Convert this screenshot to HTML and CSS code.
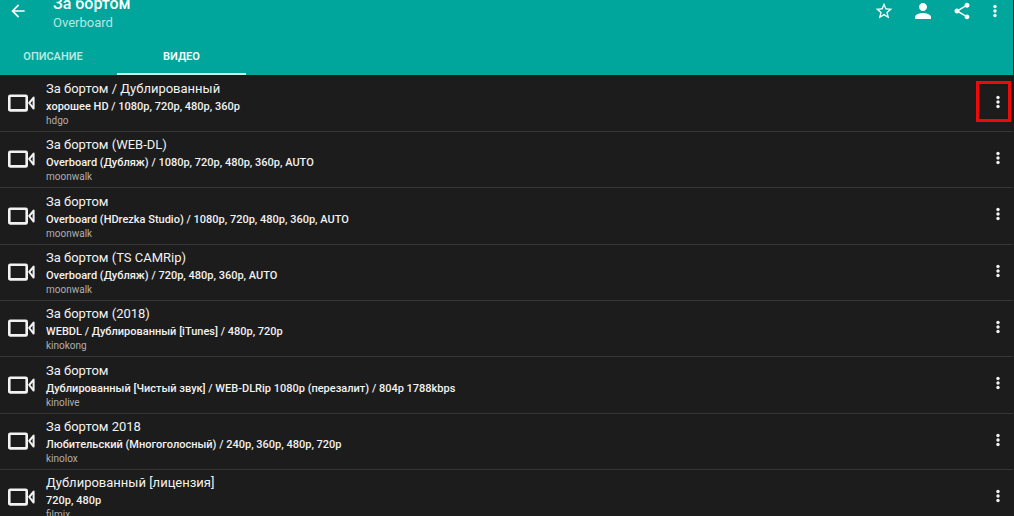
FILE: index.html
```html
<!DOCTYPE html>
<html lang="ru">
<head>
    <meta charset="UTF-8">
    <meta name="viewport" content="width=device-width, initial-scale=1.0">
    <title>За бортом</title>
    <link rel="stylesheet" href="styles.css">
</head>
<body>

    <!-- Общие иконки -->
    <svg class="sprite" aria-hidden="true">
        <symbol id="camera" viewBox="0 0 28 18">
            <rect x="1.300" y="1.800" width="17.400" height="14.600" rx="1" fill="none" stroke="currentColor" stroke-width="2.600"/>
            <path d="M25.600 3.600v11L21.200 9z" fill="none" stroke="currentColor" stroke-width="2" stroke-linejoin="round"/>
        </symbol>
        <symbol id="dots" viewBox="0 0 4 14">
            <circle cx="2" cy="2.500" r="1.700"/>
            <circle cx="2" cy="7" r="1.700"/>
            <circle cx="2" cy="11.500" r="1.700"/>
        </symbol>
    </svg>

    <div class="app">
        <header class="header">
            <div class="toolbar">
                <button class="icon-button back" aria-label="Назад">
                    <svg width="20" height="20" viewBox="0 0 24 24"><path d="M20 11H7.830l5.590-5.590L12 4l-8 8 8 8 1.410-1.410L7.830 13H20z"/></svg>
                </button>
                <div class="heading">
                    <h1>За бортом</h1>
                    <p>Overboard</p>
                </div>
                <div class="actions">
                    <button class="icon-button" aria-label="В избранное">
                        <svg width="20" height="20" viewBox="0 0 24 24"><path d="M22 9.240l-7.190-.62L12 2 9.190 8.630 2 9.240l5.460 4.730L5.820 21 12 17.270 18.180 21l-1.630-7.030zM12 15.400l-3.760 2.270 1-4.280-3.320-2.880 4.380-.38L12 6.100l1.710 4.040 4.380.38-3.320 2.880 1 4.280z"/></svg>
                    </button>
                    <button class="icon-button" aria-label="Профиль">
                        <svg width="24" height="24" viewBox="0 0 24 24"><path d="M12 12c2.210 0 4-1.790 4-4s-1.790-4-4-4-4 1.790-4 4 1.790 4 4 4zm0 2c-2.670 0-8 1.340-8 4v2h16v-2c0-2.660-5.330-4-8-4z"/></svg>
                    </button>
                    <button class="icon-button" aria-label="Поделиться">
                        <svg width="20" height="20" viewBox="0 0 24 24"><path d="M18 16.080c-.76 0-1.440.3-1.960.77L8.910 12.700c.05-.23.09-.46.09-.7s-.04-.47-.09-.7l7.050-4.110c.54.5 1.250.81 2.040.81 1.660 0 3-1.340 3-3s-1.340-3-3-3-3 1.340-3 3c0 .24.04.47.09.7L8.040 9.810C7.500 9.310 6.790 9 6 9c-1.660 0-3 1.340-3 3s1.340 3 3 3c.79 0 1.500-.31 2.040-.81l7.120 4.160c-.05.21-.08.43-.08.65 0 1.610 1.310 2.920 2.920 2.920s2.920-1.310 2.920-2.920-1.310-2.920-2.920-2.920z"/></svg>
                    </button>
                    <button class="icon-button menu" aria-label="Меню">
                        <svg width="4" height="14"><use href="#dots"/></svg>
                    </button>
                </div>
            </div>
            <nav class="tabs">
                <a class="tab" href="#about">ОПИСАНИЕ</a>
                <a class="tab active" href="#video">ВИДЕО</a>
            </nav>
        </header>

        <ul class="list" id="video">
            <li class="row">
                <svg class="camera" width="28" height="18"><use href="#camera"/></svg>
                <div class="info">
                    <h2>За бортом / Дублированный</h2>
                    <p>хорошее HD / 1080p, 720p, 480p, 360p</p>
                    <small>hdgo</small>
                </div>
                <button class="more" aria-label="Ещё"><svg width="4" height="14"><use href="#dots"/></svg></button>
                <span class="highlight"></span>
            </li>
            <li class="row">
                <svg class="camera" width="28" height="18"><use href="#camera"/></svg>
                <div class="info">
                    <h2>За бортом (WEB-DL)</h2>
                    <p>Overboard (Дубляж) / 1080p, 720p, 480p, 360p, AUTO</p>
                    <small>moonwalk</small>
                </div>
                <button class="more" aria-label="Ещё"><svg width="4" height="14"><use href="#dots"/></svg></button>
            </li>
            <li class="row">
                <svg class="camera" width="28" height="18"><use href="#camera"/></svg>
                <div class="info">
                    <h2>За бортом</h2>
                    <p>Overboard (HDrezka Studio) / 1080p, 720p, 480p, 360p, AUTO</p>
                    <small>moonwalk</small>
                </div>
                <button class="more" aria-label="Ещё"><svg width="4" height="14"><use href="#dots"/></svg></button>
            </li>
            <li class="row">
                <svg class="camera" width="28" height="18"><use href="#camera"/></svg>
                <div class="info">
                    <h2>За бортом (TS CAMRip)</h2>
                    <p>Overboard (Дубляж) / 720p, 480p, 360p, AUTO</p>
                    <small>moonwalk</small>
                </div>
                <button class="more" aria-label="Ещё"><svg width="4" height="14"><use href="#dots"/></svg></button>
            </li>
            <li class="row">
                <svg class="camera" width="28" height="18"><use href="#camera"/></svg>
                <div class="info">
                    <h2>За бортом (2018)</h2>
                    <p>WEBDL / Дублированный [iTunes] / 480p, 720p</p>
                    <small>kinokong</small>
                </div>
                <button class="more" aria-label="Ещё"><svg width="4" height="14"><use href="#dots"/></svg></button>
            </li>
            <li class="row">
                <svg class="camera" width="28" height="18"><use href="#camera"/></svg>
                <div class="info">
                    <h2>За бортом</h2>
                    <p>Дублированный [Чистый звук] / WEB-DLRip 1080p (перезалит) / 804p 1788kbps</p>
                    <small>kinolive</small>
                </div>
                <button class="more" aria-label="Ещё"><svg width="4" height="14"><use href="#dots"/></svg></button>
            </li>
            <li class="row">
                <svg class="camera" width="28" height="18"><use href="#camera"/></svg>
                <div class="info">
                    <h2>За бортом 2018</h2>
                    <p>Любительский (Многоголосный) / 240p, 360p, 480p, 720p</p>
                    <small>kinolox</small>
                </div>
                <button class="more" aria-label="Ещё"><svg width="4" height="14"><use href="#dots"/></svg></button>
            </li>
            <li class="row">
                <svg class="camera" width="28" height="18"><use href="#camera"/></svg>
                <div class="info">
                    <h2>Дублированный [лицензия]</h2>
                    <p>720p, 480p</p>
                    <small>filmix</small>
                </div>
                <button class="more" aria-label="Ещё"><svg width="4" height="14"><use href="#dots"/></svg></button>
            </li>
        </ul>
    </div>

</body>
</html>
```
FILE: styles.css
```css
* {
    box-sizing: border-box;
}

body {
    margin: 0;
    background-color: #1c1c1c;
    color: #f2f2f2;
    font-family: Roboto, 'Noto Sans', sans-serif;
}

h1, h2, p, ul {
    margin: 0;
    padding: 0;
}

button {
    display: flex;
    align-items: center;
    justify-content: center;
    padding: 0;
    border: none;
    background: none;
    color: inherit;
    cursor: pointer;
}

svg {
    display: block;
    fill: currentColor;
}

.sprite {
    position: absolute;
    width: 0;
    height: 0;
}

.app {
    display: flex;
    flex-direction: column;
    height: 100vh;
    padding-right: 1px;
    overflow: hidden;
}

/* Шапка */
.header {
    flex: none;
    background-color: #00a69b;
    color: #fff;
}

.toolbar {
    display: flex;
    height: 32px;
    padding: 0 8px;
    overflow: hidden;
}

.icon-button {
    height: 22px;
}

.back {
    width: 20px;
}

.menu {
    width: 12px;
}

/* Заголовок частично уходит за верхний край */
.heading {
    display: flex;
    flex: 1;
    flex-direction: column;
    justify-content: flex-end;
    padding-left: 25px;
}

.heading h1 {
    font-size: 16px;
    font-weight: 500;
    line-height: 20px;
}

.heading p {
    color: #b5e8e2;
    font-size: 13px;
    line-height: 18px;
}

.actions {
    display: flex;
    gap: 17px;
    padding-right: 4px;
}

.tabs {
    display: flex;
    height: 43px;
}

.tab {
    display: flex;
    align-items: center;
    justify-content: center;
    width: 129px;
    padding-top: 8px;
    border-bottom: 2px solid transparent;
    color: #b5e8e2;
    font-size: 11px;
    font-weight: 600;
    text-decoration: none;
}

.tab:first-child {
    width: 117px;
    padding-right: 11px;
}

.tab.active {
    border-bottom-color: #c9f0ec;
    color: #fff;
}

/* Список видео */
.list {
    padding-top: 1px;
    list-style: none;
}

.row {
    position: relative;
    display: flex;
    align-items: center;
    height: 56px;
    padding-left: 8px;
    border-bottom: 1px solid #363636;
}

.row:nth-child(3n) {
    height: 57px;
}

.camera {
    flex: none;
    margin-bottom: 1px;
}

.info {
    flex: 1;
    padding-bottom: 1px;
    padding-left: 10px;
}

.info h2 {
    font-size: 13px;
    font-weight: 400;
    line-height: 19px;
}

.info p {
    font-size: 11px;
    font-weight: 500;
    line-height: 17px;
}

.info small {
    display: block;
    color: #b0b0b0;
    font-size: 10px;
    line-height: 12px;
}

.more {
    width: 30px;
    height: 40px;
    padding-bottom: 4px;
}

/* Красная рамка вокруг кнопки меню */
.highlight {
    position: absolute;
    top: 5px;
    right: 2px;
    width: 35px;
    height: 41px;
    border: 3px solid #ee0a08;
    pointer-events: none;
}
```
